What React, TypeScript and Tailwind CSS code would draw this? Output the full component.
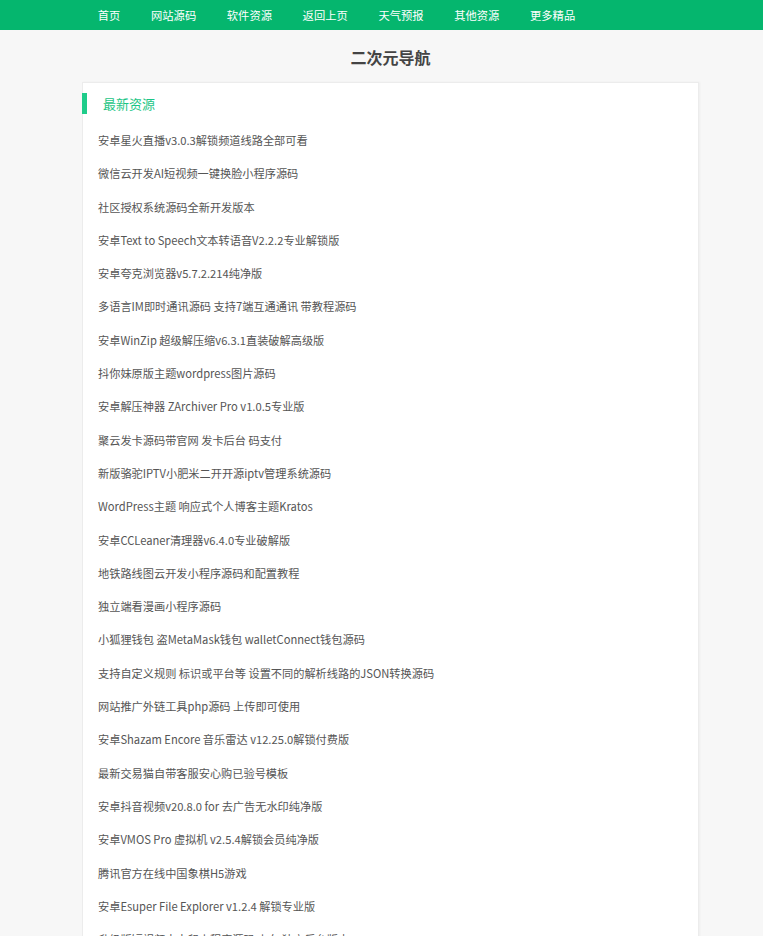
import React from "react";

const navItems = ["首页", "网站源码", "软件资源", "返回上页", "天气预报", "其他资源", "更多精品"];

const items = [
  "安卓星火直播v3.0.3解锁频道线路全部可看",
  "微信云开发AI短视频一键换脸小程序源码",
  "社区授权系统源码全新开发版本",
  "安卓Text to Speech文本转语音V2.2.2专业解锁版",
  "安卓夸克浏览器v5.7.2.214纯净版",
  "多语言IM即时通讯源码 支持7端互通通讯 带教程源码",
  "安卓WinZip 超级解压缩v6.3.1直装破解高级版",
  "抖你妹原版主题wordpress图片源码",
  "安卓解压神器 ZArchiver Pro v1.0.5专业版",
  "聚云发卡源码带官网 发卡后台 码支付",
  "新版骆驼IPTV小肥米二开开源iptv管理系统源码",
  "WordPress主题 响应式个人博客主题Kratos",
  "安卓CCLeaner清理器v6.4.0专业破解版",
  "地铁路线图云开发小程序源码和配置教程",
  "独立端看漫画小程序源码",
  "小狐狸钱包 盗MetaMask钱包 walletConnect钱包源码",
  "支持自定义规则 标识或平台等 设置不同的解析线路的JSON转换源码",
  "网站推广外链工具php源码 上传即可使用",
  "安卓Shazam Encore 音乐雷达 v12.25.0解锁付费版",
  "最新交易猫自带客服安心购已验号模板",
  "安卓抖音视频v20.8.0 for 去广告无水印纯净版",
  "安卓VMOS Pro 虚拟机 v2.5.4解锁会员纯净版",
  "腾讯官方在线中国象棋H5游戏",
  "安卓Esuper File Explorer v1.2.4 解锁专业版",
  "升级版短视频去水印小程序源码 上车 独立后台版本",
];

export default function App() {
  return (
    <div
      className="min-h-[936px] bg-[#f7f7f7]"
      style={{ fontFamily: '"Noto Sans CJK SC", "Microsoft YaHei", sans-serif' }}
    >
      <nav className="h-[30px] bg-[#05b66e] flex pl-[82.5px]">
        {navItems.map((n) => (
          <a key={n} className="px-[15.3px] text-[11.3px] leading-[30px] text-white whitespace-nowrap">
            {n}
          </a>
        ))}
      </nav>
      <div className="ml-[82px] w-[617px]">
        <h1 className="pt-[16px] pb-[14px] text-center text-[16px] leading-[22px] font-bold text-[#444]">
          二次元导航
        </h1>
        <div className="bg-white border border-[#ececec] shadow-[1px_0_2px_rgba(0,0,0,0.04)]">
          <div className="pt-[10px] flex items-center -ml-px">
            <span className="w-[5px] h-[21px] bg-[#1fcc8a]" />
            <span className="ml-[16px] text-[13px] leading-[21px] text-[#1cc585]">最新资源</span>
          </div>
          <ul className="pt-[10px] px-[15px]">
            {items.map((t) => (
              <li key={t} className="h-[33.3px] leading-[33.3px] text-[11.2px] text-[#555] whitespace-nowrap">
                {t}
              </li>
            ))}
          </ul>
        </div>
      </div>
    </div>
  );
}
